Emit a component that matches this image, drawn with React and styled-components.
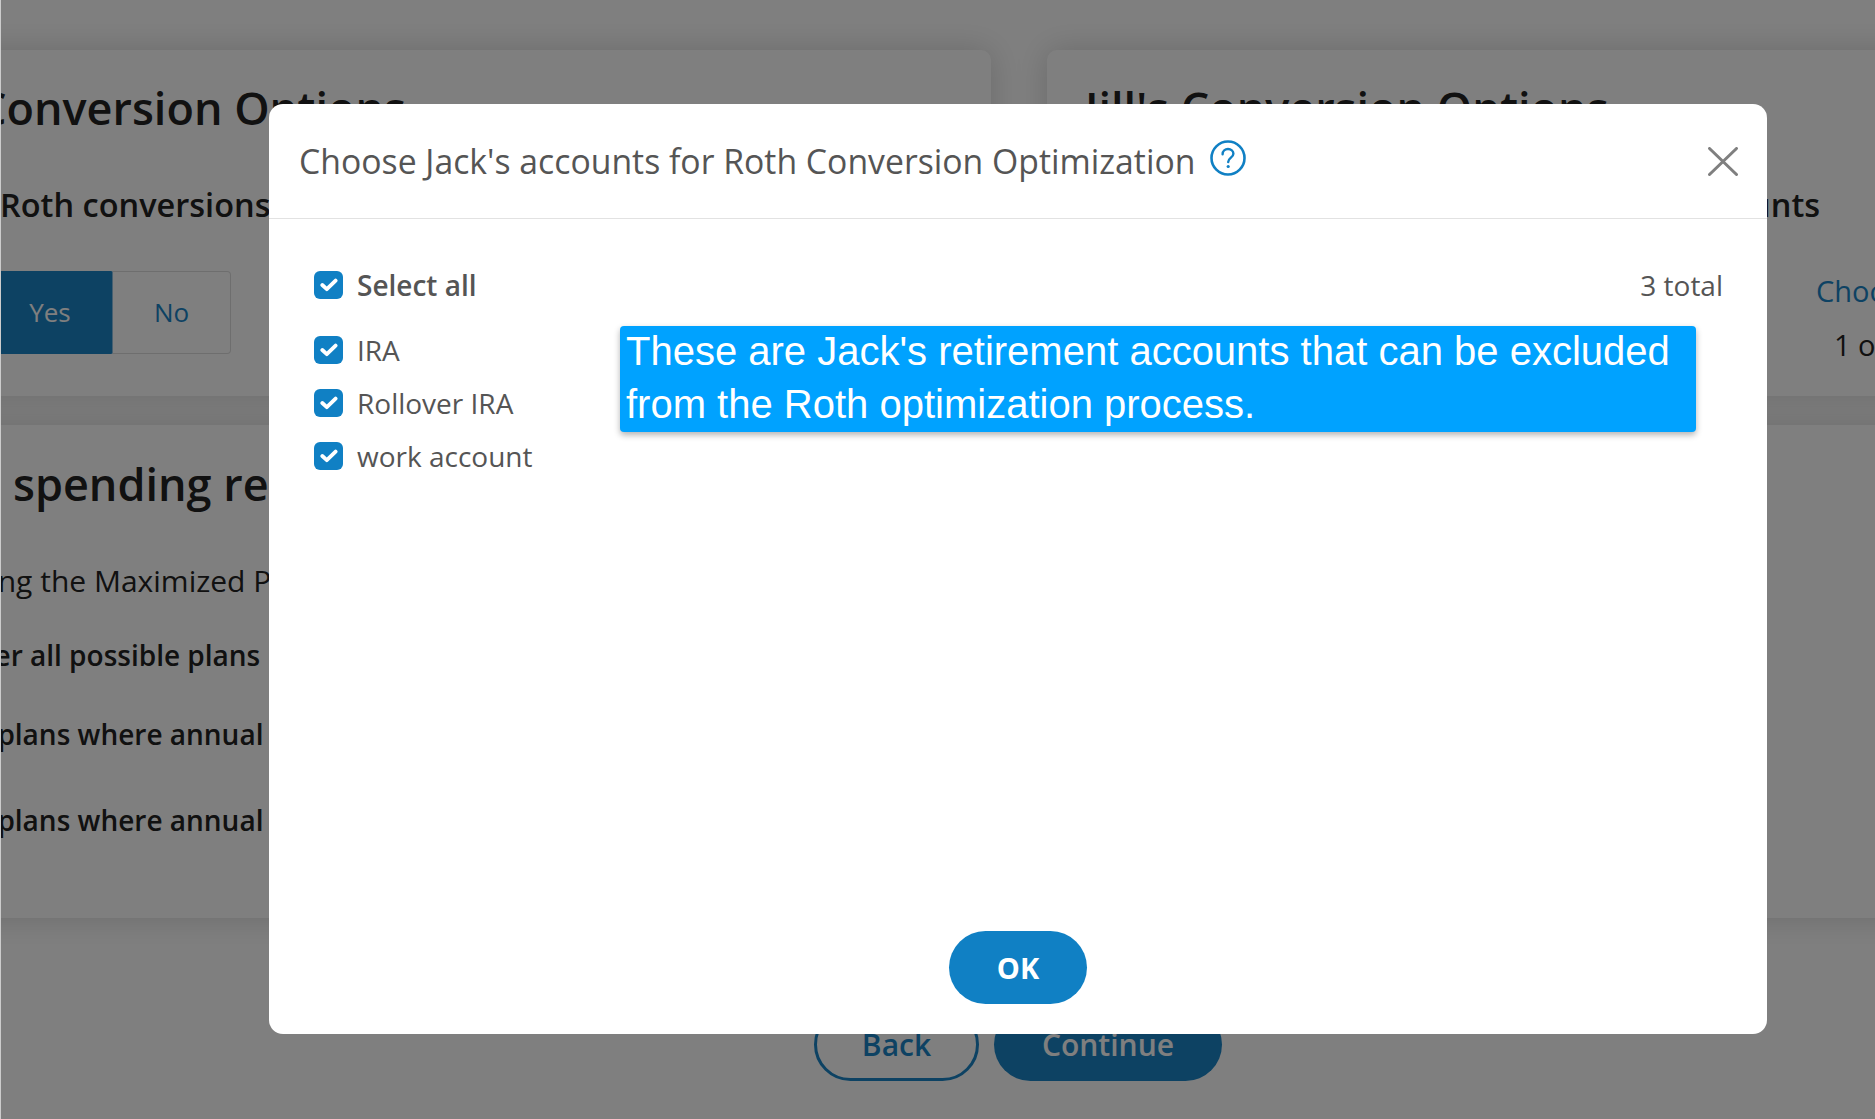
import React from "react";
import styled, { createGlobalStyle } from "styled-components";

const Global = createGlobalStyle`
  html, body { margin: 0; padding: 0; overflow: hidden; background: #fff; }
  * { box-sizing: border-box; }
`;

const Page = styled.div`
  position: relative;
  width: 1875px;
  height: 1119px;
  overflow: hidden;
  background: #fff;
  font-family: "Open Sans", "Liberation Sans", sans-serif;
  color: #222;
  border-left: 1px solid #ccc;
`;

const Shell = styled.div`
  display: flex;
  flex-direction: column;
  width: 2400px;
  margin-left: -201px;
  padding-top: 50px;
`;

const CardRow = styled.div`
  display: flex;
  gap: 56px;
`;

const Card = styled.section`
  flex: none;
  width: ${(p) => p.$width}px;
  height: ${(p) => p.$height}px;
  background: #fff;
  border-radius: 10px;
  box-shadow: 0 0 32px rgba(0, 0, 0, 0.17);
  display: flex;
  flex-direction: column;
  align-items: flex-start;
  overflow: hidden;
`;

const WideCard = styled(Card)`
  margin-top: 29px;
`;

const Heading = styled.h2`
  margin: ${(p) => p.$top}px 0 0 ${(p) => p.$left}px;
  font-size: 45px;
  line-height: 60px;
  font-weight: 600;
  white-space: nowrap;
  color: #222;
`;

const Label = styled.div`
  margin: ${(p) => p.$top}px 0 0 ${(p) => p.$left}px;
  font-size: ${(p) => p.$size || 32.5}px;
  line-height: 40px;
  font-weight: ${(p) => p.$weight || 600};
  white-space: nowrap;
  color: #222;
`;

const Toggle = styled.div`
  display: flex;
  margin: 46px 0 0 ${(p) => p.$left}px;
  height: 83px;
`;

const ToggleOption = styled.div`
  width: ${(p) => (p.$on ? 124 : 119)}px;
  display: flex;
  align-items: center;
  justify-content: center;
  font-size: 26px;
  padding-bottom: 2px;
  color: ${(p) => (p.$on ? "#fff" : "#1a84c6")};
  background: ${(p) => (p.$on ? "#1a84c6" : "#fff")};
  border: 1px solid ${(p) => (p.$on ? "#1a84c6" : "#ddd")};
  border-left-color: ${(p) => (p.$on ? "#1a84c6" : "#8fc1e2")};
  border-radius: ${(p) => (p.$on ? "4px 0 0 4px" : "0 4px 4px 0")};
`;

const CardTop = styled.div`
  display: flex;
  flex-direction: column;
  align-items: flex-start;
`;

const LinkText = styled.div`
  margin: ${(p) => p.$top}px 0 0 ${(p) => p.$left}px;
  font-size: 29px;
  line-height: 40px;
  white-space: nowrap;
  color: ${(p) => p.$color};
`;

const Footer = styled.div`
  display: flex;
  justify-content: center;
  margin-top: 90px;
  margin-left: 201px;
  width: 1875px;
`;

const FooterInner = styled.div`
  display: flex;
  gap: 15px;
  margin-left: 159px;
`;

const PillOutline = styled.div`
  width: 165px;
  height: 73px;
  border-radius: 37px;
  border: 3px solid #1a84c6;
  color: #1a84c6;
  font-size: 30px;
  font-weight: 600;
  display: flex;
  align-items: center;
  justify-content: center;
`;

const PillSolid = styled.div`
  width: 228px;
  height: 73px;
  border-radius: 37px;
  background: #1a84c6;
  color: #fff;
  font-size: 30px;
  font-weight: 600;
  display: flex;
  align-items: center;
  justify-content: center;
`;

const Backdrop = styled.div`
  position: absolute;
  inset: 0 0 0 -1px;
  background: rgba(0, 0, 0, 0.5);
`;

const Modal = styled.div`
  position: absolute;
  left: 268px;
  top: 104px;
  width: 1498px;
  height: 930px;
  background: #fff;
  border-radius: 14px;
  display: flex;
  flex-direction: column;
`;

const ModalHeader = styled.header`
  height: 115px;
  flex: none;
  border-bottom: 1px solid #e2e2e2;
  display: flex;
  align-items: flex-start;
  padding: 34px 29px 0 30px;
`;

const ModalTitle = styled.h3`
  margin: 0;
  font-size: 33.75px;
  line-height: 46px;
  font-weight: 400;
  color: #555;
  white-space: nowrap;
`;

const HelpIcon = styled.svg`
  width: 36px;
  height: 36px;
  margin: 2px 0 0 15px;
`;

const CloseIcon = styled.svg`
  width: 30px;
  height: 29px;
  margin-left: auto;
  margin-top: 9px;
`;

const ModalBody = styled.div`
  position: relative;
  flex: 1;
  padding: 52px 44px 0 45px;
`;

const SelectAllRow = styled.div`
  display: flex;
  align-items: center;
  justify-content: space-between;
  height: 28px;
  margin-bottom: 37px;
`;

const AccountList = styled.ul`
  list-style: none;
  margin: 0;
  padding: 0;
  display: flex;
  flex-direction: column;
  gap: 25px;
`;

const CheckRow = styled.li`
  display: flex;
  align-items: center;
  gap: 14px;
  height: 28px;
`;

const CheckGroup = styled.div`
  display: flex;
  align-items: center;
  gap: 14px;
`;

const Box = styled.span`
  width: 29px;
  height: 28px;
  flex: none;
  border-radius: 6px;
  background: #1080c4;
  display: flex;
  align-items: center;
  justify-content: center;
`;

const CheckText = styled.span`
  font-size: 28px;
  line-height: 36px;
  font-weight: ${(p) => (p.$bold ? 600 : 400)};
  color: #555;
  white-space: nowrap;
`;

const Callout = styled.div`
  position: absolute;
  left: 351px;
  top: 107px;
  width: 1076px;
  height: 106px;
  padding: 0 6px;
  background: #00a2ff;
  border-radius: 4px;
  box-shadow: 0 3px 6px rgba(0, 0, 0, 0.3);
  color: #fff;
  font-family: "Liberation Sans", Arial, sans-serif;
  font-size: 40px;
  line-height: 53px;
`;

const CalloutText = styled.p`
  margin: -1px 0 0;
`;

const ModalFooter = styled.footer`
  flex: none;
  display: flex;
  justify-content: center;
  padding-bottom: 30px;
`;

const OkButton = styled.button`
  width: 138px;
  height: 73px;
  border: none;
  border-radius: 37px;
  background: #1080c4;
  color: #fff;
  font-family: inherit;
  font-size: 29px;
  font-weight: 700;
`;

const Check = () => (
  <svg width="18" height="14" viewBox="0 0 18 14" fill="none">
    <path d="M2.3 7 L6.8 11.2 L15.6 2.6" stroke="#fff" strokeWidth="3.8" strokeLinecap="round" strokeLinejoin="round" />
  </svg>
);

const accounts = ["IRA", "Rollover IRA", "work account"];

export default function App() {
  return (
    <Page>
      <Global />
      <Shell>
        <CardRow>
          <Card $width={1191} $height={346}>
            <Heading $top={28} $left={178}>Conversion Options</Heading>
            <Label $top={47} $left={200}>Roth conversions for Jack</Label>
            <Toggle $left={188}>
              <ToggleOption $on>Yes</ToggleOption>
              <ToggleOption>No</ToggleOption>
            </Toggle>
          </Card>
          <Card $width={1100} $height={346}>
            <CardTop>
              <Heading $top={28} $left={38}>Jill's Conversion Options</Heading>
              <Label $top={47} $left={51}>Roth conversions for Jill's retirement accounts</Label>
              <LinkText $top={46} $left={769} $color="#1a84c6">Choose accounts</LinkText>
              <LinkText $top={14} $left={787} $color="#222">1 of 3 selected</LinkText>
            </CardTop>
          </Card>
        </CardRow>
        <WideCard $width={2400} $height={493}>
          <Heading $top={29} $left={213}>spending requirements</Heading>
          <Label $top={47} $left={114} $size={30} $weight={400}>Showing the Maximized Plan</Label>
          <Label $top={34} $left={103} $size={28}>Consider all possible plans</Label>
          <Label $top={39} $left={117} $size={28}>Show plans where annual</Label>
          <Label $top={46} $left={117} $size={28}>Show plans where annual</Label>
        </WideCard>
        <Footer>
          <FooterInner>
            <PillOutline>Back</PillOutline>
            <PillSolid>Continue</PillSolid>
          </FooterInner>
        </Footer>
      </Shell>
      <Backdrop />
      <Modal>
        <ModalHeader>
          <ModalTitle>Choose Jack's accounts for Roth Conversion Optimization</ModalTitle>
          <HelpIcon viewBox="0 0 36 36" fill="none">
            <circle cx="18" cy="18" r="16.5" stroke="#1080c4" strokeWidth="2.6" />
            <path d="M12.6 14.2 C12.6 10.8 15.2 9 18 9 C21 9 23.4 11 23.4 13.8 C23.4 17.6 18.2 17.8 18.2 22" stroke="#1080c4" strokeWidth="2.4" strokeLinecap="round" />
            <circle cx="18.2" cy="26.5" r="1.6" fill="#1080c4" />
          </HelpIcon>
          <CloseIcon viewBox="0 0 30 30" fill="none" preserveAspectRatio="none">
            <path d="M1.5 1.5 L28.5 28.5 M28.5 1.5 L1.5 28.5" stroke="#7f7f7f" strokeWidth="3" strokeLinecap="round" />
          </CloseIcon>
        </ModalHeader>
        <ModalBody>
          <SelectAllRow>
            <CheckGroup>
              <Box><Check /></Box>
              <CheckText $bold>Select all</CheckText>
            </CheckGroup>
            <CheckText>3 total</CheckText>
          </SelectAllRow>
          <AccountList>
            {accounts.map((a) => (
              <CheckRow key={a}>
                <Box><Check /></Box>
                <CheckText>{a}</CheckText>
              </CheckRow>
            ))}
          </AccountList>
          <Callout>
            <CalloutText>
              These are Jack's retirement accounts that can be excluded from the Roth optimization process.
            </CalloutText>
          </Callout>
        </ModalBody>
        <ModalFooter>
          <OkButton>OK</OkButton>
        </ModalFooter>
      </Modal>
    </Page>
  );
}
